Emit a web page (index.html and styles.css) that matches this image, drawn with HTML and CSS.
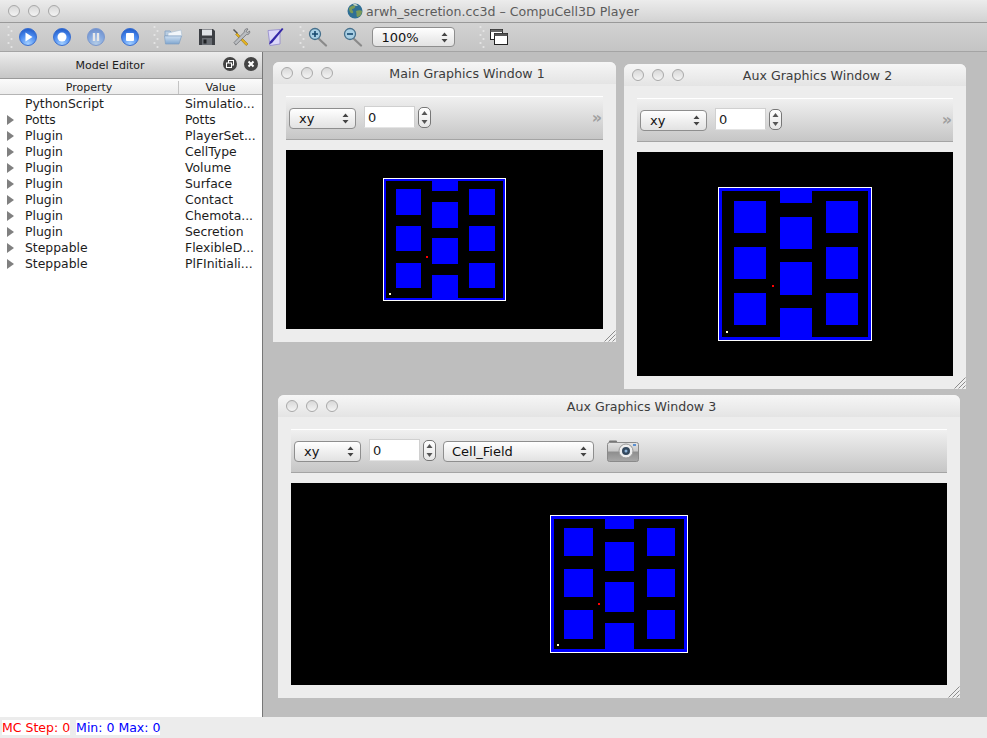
FILE: index.html
```html
<!DOCTYPE html>
<html>
<head>
<meta charset="UTF-8">
<title>arwh_secretion.cc3d - CompuCell3D Player</title>
<link rel="stylesheet" href="styles.css">
</head>
<body>

<svg class="defs" width="0" height="0">
  <defs>
    <radialGradient id="ball" cx="50%" cy="90%" r="85%">
      <stop offset="0" stop-color="#a4d0ff"/>
      <stop offset="0.6" stop-color="#4c8cf0"/>
      <stop offset="1" stop-color="#2560cc"/>
    </radialGradient>
    <linearGradient id="folder" x1="0" y1="0" x2="0" y2="1">
      <stop offset="0" stop-color="#cfe0f2"/>
      <stop offset="1" stop-color="#7fa6cf"/>
    </linearGradient>
    <linearGradient id="camera" x1="0" y1="0" x2="0" y2="1">
      <stop offset="0" stop-color="#e4e4e4"/>
      <stop offset="0.45" stop-color="#c8c8c8"/>
      <stop offset="0.5" stop-color="#8e8e8e"/>
      <stop offset="1" stop-color="#a8a8a8"/>
    </linearGradient>
    <symbol id="lattice" viewBox="0 0 154 154">
      <rect x="0.5" y="0.5" width="153" height="153" fill="#00f" stroke="#fff" vector-effect="non-scaling-stroke"/>
      <rect x="4" y="4" width="146" height="146" fill="#000"/>
      <rect x="16" y="14" width="32" height="32" fill="#00f"/>
      <rect x="16" y="60" width="32" height="32" fill="#00f"/>
      <rect x="16" y="106" width="32" height="32" fill="#00f"/>
      <rect x="108" y="14" width="32" height="32" fill="#00f"/>
      <rect x="108" y="60" width="32" height="32" fill="#00f"/>
      <rect x="108" y="106" width="32" height="32" fill="#00f"/>
      <rect x="61.6" y="1" width="32" height="15" fill="#00f"/>
      <rect x="61.6" y="30" width="32" height="32" fill="#00f"/>
      <rect x="61.6" y="75" width="32" height="33" fill="#00f"/>
      <rect x="61.6" y="121" width="32" height="32" fill="#00f"/>
      <rect x="54" y="98" width="2" height="2" fill="#f00"/>
      <rect x="8" y="144" width="2" height="2" fill="#ffc"/>
    </symbol>
    <symbol id="updown" viewBox="0 0 7 11">
      <path d="M3.5 0.5L6.5 4H0.5zM3.5 10.5L0.5 7H6.5z" fill="#444"/>
    </symbol>
    <symbol id="grip" viewBox="0 0 6 24">
      <g fill="#e6e6e6">
        <circle cx="1.5" cy="2" r="1.1"/><circle cx="4.5" cy="6" r="1.1"/><circle cx="1.5" cy="10" r="1.1"/>
        <circle cx="4.5" cy="14" r="1.1"/><circle cx="1.5" cy="18" r="1.1"/><circle cx="4.5" cy="22" r="1.1"/>
      </g>
    </symbol>
    <symbol id="resize" viewBox="0 0 12 12">
      <path d="M0.5 11.5L11.5 0.5M4.5 11.5L11.5 4.5M8.5 11.5L11.5 8.5" stroke="#8c8c8c" fill="none"/>
    </symbol>
  </defs>
</svg>

<div class="titlebar">
  <div class="lights">
    <span class="light"></span><span class="light"></span><span class="light"></span>
  </div>
  <div class="app-title">
    <svg class="globe" width="16" height="16" viewBox="0 0 16 16">
      <circle cx="8" cy="8" r="7.5" fill="#2f6f95"/>
      <path d="M2 5c2-2 4-3 6-2 1 1-1 3-3 3 0 2 2 2 1 4-2 1-4-1-4-5zM9 8c2-1 5-1 6 0 0 3-2 6-5 6-1-2 0-3-1-6z" fill="#7b9a58"/>
      <path d="M6 1.5c2-1 4 0 5 1-2 1-4 0-5-1z" fill="#c8d4c0"/>
    </svg>
    <span>arwh_secretion.cc3d &ndash; CompuCell3D Player</span>
  </div>
</div>

<div class="toolbar">
  <svg class="tb-grip" width="6" height="24"><use href="#grip"/></svg>
  <div class="tb-group tb-run">
    <svg class="tool" viewBox="0 0 20 20"><circle cx="10" cy="10" r="8.5" fill="url(#ball)" stroke="#3a6fd0"/><path d="M7.5 5.5L14.5 10L7.5 14.5z" fill="#fff"/></svg>
    <svg class="tool" viewBox="0 0 20 20"><circle cx="10" cy="10" r="8.5" fill="url(#ball)" stroke="#3a6fd0"/><circle cx="10" cy="10" r="4.5" fill="#fff"/></svg>
    <svg class="tool dim" viewBox="0 0 20 20"><circle cx="10" cy="10" r="8.5" fill="url(#ball)" stroke="#3a6fd0"/><path d="M6.8 6h2.4v8H6.8zM10.8 6h2.4v8h-2.4z" fill="#fff"/></svg>
    <svg class="tool" viewBox="0 0 20 20"><circle cx="10" cy="10" r="8.5" fill="url(#ball)" stroke="#3a6fd0"/><rect x="6" y="6" width="8" height="8" rx="1" fill="#fff"/></svg>
  </div>
  <svg class="tb-grip grip-b" width="6" height="24"><use href="#grip"/></svg>
  <div class="tb-group tb-file">
    <svg class="tool" viewBox="0 0 20 20"><path d="M2 4h5l2 2h6v3H2z" fill="#b9cde2" stroke="#8ea9c6"/><path d="M5 6l13-3 1 6H5z" fill="#f2f6fa" stroke="#a8bdd2" stroke-width="0.6"/><path d="M1.5 9h17L16 17H2.5z" fill="url(#folder)" stroke="#7f9fc2" stroke-width="0.7"/></svg>
    <svg class="tool" viewBox="0 0 20 20"><path d="M2 2h14l2 2v14H2z" fill="#3c3f44"/><rect x="5" y="2.5" width="10" height="6" fill="#dfe2e6"/><rect x="5" y="11" width="10" height="7" fill="#6a6e74"/><rect x="6.5" y="12.5" width="3" height="4" fill="#1f2124"/></svg>
    <svg class="tool" viewBox="0 0 20 20"><path d="M3 2l4 4-1 1-4-4z" fill="#555"/><path d="M6 6l11 11-1.8 1.6L4.6 7.4z" fill="#e5b21c" stroke="#8a6a10" stroke-width="0.5"/><path d="M17 2c-2-1-4 1-3.6 3L3 15.5 4.800 18l10.600-10.400c2 .5 4-1.500 3.200-3.600l-2 1.500-1.500-1z" fill="#b9bcc0" stroke="#55585c" stroke-width="0.6"/></svg>
    <svg class="tool" viewBox="0 0 20 20"><path d="M3 3.500L15 2.500V17L5 18.500z" fill="#dcd8f8" stroke="#8f86cc" stroke-width="0.8"/><path d="M17 1l1.500 1L7 16l-3 1.500L5 14.500z" fill="#3427a8"/></svg>
  </div>
  <svg class="tb-grip grip-c" width="6" height="24"><use href="#grip"/></svg>
  <div class="tb-group tb-zoom">
    <svg class="tool" viewBox="0 0 20 20"><path d="M10.500 11.500L18 18.500" stroke="#8a8a8a" stroke-width="2.200" stroke-linecap="round"/><circle cx="7" cy="7" r="5.500" fill="#a9cfe4" stroke="#46708c" stroke-width="1.300"/><path d="M4 7h6M7 4v6" stroke="#16486e" stroke-width="1.600"/></svg>
    <svg class="tool" viewBox="0 0 20 20"><path d="M10.500 11.500L18 18.500" stroke="#8a8a8a" stroke-width="2.200" stroke-linecap="round"/><circle cx="7" cy="7" r="5.500" fill="#a9cfe4" stroke="#46708c" stroke-width="1.300"/><path d="M4 7h6" stroke="#16486e" stroke-width="1.600"/></svg>
  </div>
  <div class="combo zoom-combo">
    <span>100%</span>
    <svg width="7" height="11"><use href="#updown"/></svg>
  </div>
  <svg class="tb-grip grip-d" width="6" height="24"><use href="#grip"/></svg>
  <svg class="copy-icon" width="18" height="16" viewBox="0 0 18 16">
    <rect x="0.500" y="0.500" width="12" height="10" fill="#fff" stroke="#222"/>
    <rect x="0.500" y="0.500" width="12" height="2.500" fill="#666"/>
    <rect x="4.500" y="4.500" width="13" height="11" fill="#fff" stroke="#222"/>
    <rect x="4.500" y="4.500" width="13" height="2.500" fill="#555"/>
  </svg>
</div>

<div class="main">
  <div class="editor">
    <div class="editor-head">
      <span class="editor-title">Model Editor</span>
      <svg class="dock-btn dock-float" width="14" height="14" viewBox="0 0 14 14"><circle cx="7" cy="7" r="7" fill="#444"/><rect x="5.500" y="3.500" width="5" height="4.500" fill="none" stroke="#fff"/><rect x="3.500" y="6" width="5" height="4.500" fill="#444" stroke="#fff"/></svg>
      <svg class="dock-btn dock-close" width="14" height="14" viewBox="0 0 14 14"><circle cx="7" cy="7" r="7" fill="#444"/><path d="M4.500 4.500l5 5M9.500 4.500l-5 5" stroke="#fff" stroke-width="2"/></svg>
    </div>
    <div class="columns">
      <span class="col-prop">Property</span>
      <span class="col-val">Value</span>
    </div>
    <ul class="tree">
      <li class="leaf"><span class="prop">PythonScript</span><span class="val">Simulatio...</span></li>
      <li><span class="prop">Potts</span><span class="val">Potts</span></li>
      <li><span class="prop">Plugin</span><span class="val">PlayerSet...</span></li>
      <li><span class="prop">Plugin</span><span class="val">CellType</span></li>
      <li><span class="prop">Plugin</span><span class="val">Volume</span></li>
      <li><span class="prop">Plugin</span><span class="val">Surface</span></li>
      <li><span class="prop">Plugin</span><span class="val">Contact</span></li>
      <li><span class="prop">Plugin</span><span class="val">Chemota...</span></li>
      <li><span class="prop">Plugin</span><span class="val">Secretion</span></li>
      <li><span class="prop">Steppable</span><span class="val">FlexibleD...</span></li>
      <li><span class="prop">Steppable</span><span class="val">PlFInitiali...</span></li>
    </ul>
  </div>

  <div class="desk">
    <section class="window win-1">
      <header class="win-head">
        <div class="lights"><span class="light"></span><span class="light"></span><span class="light"></span></div>
        <span class="win-title">Main Graphics Window 1</span>
      </header>
      <div class="win-body">
        <div class="win-tools">
          <div class="combo plane"><span>xy</span><svg width="7" height="11"><use href="#updown"/></svg></div>
          <div class="field">0</div>
          <div class="stepper"><svg width="7" height="15" viewBox="0 0 7 15"><path d="M3.500 1L6.500 5H0.500zM3.500 14L0.500 10H6.500z" fill="#555"/></svg></div>
          <span class="more">&raquo;</span>
        </div>
        <div class="view"><svg class="lattice l-1"><use href="#lattice"/></svg></div>
      </div>
      <svg class="resize" width="12" height="12"><use href="#resize"/></svg>
    </section>

    <section class="window win-2">
      <header class="win-head">
        <div class="lights"><span class="light"></span><span class="light"></span><span class="light"></span></div>
        <span class="win-title">Aux Graphics Window 2</span>
      </header>
      <div class="win-body">
        <div class="win-tools">
          <div class="combo plane"><span>xy</span><svg width="7" height="11"><use href="#updown"/></svg></div>
          <div class="field">0</div>
          <div class="stepper"><svg width="7" height="15" viewBox="0 0 7 15"><path d="M3.500 1L6.500 5H0.500zM3.500 14L0.500 10H6.500z" fill="#555"/></svg></div>
          <span class="more">&raquo;</span>
        </div>
        <div class="view"><svg class="lattice l-2"><use href="#lattice"/></svg></div>
      </div>
      <svg class="resize" width="12" height="12"><use href="#resize"/></svg>
    </section>

    <section class="window win-3">
      <header class="win-head">
        <div class="lights"><span class="light"></span><span class="light"></span><span class="light"></span></div>
        <span class="win-title">Aux Graphics Window 3</span>
      </header>
      <div class="win-body">
        <div class="win-tools">
          <div class="combo plane"><span>xy</span><svg width="7" height="11"><use href="#updown"/></svg></div>
          <div class="field">0</div>
          <div class="stepper"><svg width="7" height="15" viewBox="0 0 7 15"><path d="M3.500 1L6.500 5H0.500zM3.500 14L0.500 10H6.500z" fill="#555"/></svg></div>
          <div class="combo fields"><span>Cell_Field</span><svg width="7" height="11"><use href="#updown"/></svg></div>
          <svg class="camera" width="32" height="22" viewBox="0 0 32 22">
            <rect x="2" y="0.500" width="8" height="3" rx="1" fill="#777"/>
            <rect x="0.500" y="2.500" width="31" height="19" rx="2" fill="url(#camera)" stroke="#8a8a8a"/>
            <circle cx="19" cy="11" r="7" fill="#eee" stroke="#999"/>
            <circle cx="19" cy="11" r="4" fill="#33485e"/>
            <circle cx="19" cy="11" r="1.500" fill="#8fb4d8"/>
            <rect x="26" y="4" width="3" height="2" fill="#5a8fd0"/>
          </svg>
        </div>
        <div class="view"><svg class="lattice l-3"><use href="#lattice"/></svg></div>
      </div>
      <svg class="resize" width="12" height="12"><use href="#resize"/></svg>
    </section>
  </div>
</div>

<div class="status">
  <span class="chip step">MC Step: 0</span>
  <span class="chip range">Min: 0 Max: 0</span>
</div>

</body>
</html>
```

FILE: styles.css
```css
html, body {
  margin: 0;
  height: 100%;
}
body {
  width: 987px;
  height: 738px;
  overflow: hidden;
  display: flex;
  flex-direction: column;
  font-family: "DejaVu Sans", Verdana, sans-serif;
  font-size: 12.4px;
  color: #1c1c1c;
  background-color: #ececec;
}
.defs {
  position: absolute;
}

/* title bar */
.titlebar {
  height: 22px;
  flex: none;
  display: flex;
  align-items: center;
  justify-content: center;
  position: relative;
  background: linear-gradient(#ececec, #d2d2d2);
  border-bottom: 1px solid #999;
}
.titlebar .lights {
  position: absolute;
  left: 8px;
  top: 5px;
}
.lights {
  display: flex;
  gap: 8px;
}
.light {
  width: 10px;
  height: 10px;
  border: 1px solid #a8a8a8;
  border-radius: 50%;
  background: linear-gradient(#d8d8d8, #f4f4f4);
}
.app-title {
  display: flex;
  align-items: center;
  gap: 3px;
  color: #5c5c5c;
  font-size: 12.6px;
  margin-left: -1px;
}

/* main toolbar */
.toolbar {
  height: 29px;
  flex: none;
  display: flex;
  align-items: center;
  padding-left: 7px;
  background: linear-gradient(#d2d2d2, #c4c4c4);
  border-bottom: 1px solid #a4a4a4;
  box-sizing: border-box;
}
.tb-group {
  display: flex;
  gap: 14px;
}
.tool {
  width: 20px;
  height: 20px;
}
.tool.dim {
  opacity: 0.55;
}
.tb-run {
  margin-left: 4.5px;
}
.grip-b {
  margin-left: 13px;
}
.tb-file {
  margin-left: 4px;
}
.grip-c {
  margin-left: 14px;
}
.tb-zoom {
  margin-left: 3px;
  gap: 15px;
}
.zoom-combo {
  margin-left: 9px;
  width: 83px;
  height: 20px;
  font-size: 12px;
}
.grip-d {
  margin-left: 24px;
}
.copy-icon {
  margin-left: 5px;
}

/* shared controls */
.combo {
  display: flex;
  align-items: center;
  justify-content: space-between;
  box-sizing: border-box;
  padding: 0 6px 0 9px;
  background: linear-gradient(#ffffff, #f0f0f0 50%, #e2e2e2);
  border: 1px solid #8e8e8e;
  border-radius: 4px;
  color: #111;
  font-size: 13px;
}

/* model editor */
.main {
  flex: 1;
  display: flex;
  min-height: 0;
}
.editor {
  width: 262px;
  flex: none;
  display: flex;
  flex-direction: column;
  background-color: #fff;
  border-right: 1px solid #777;
}
.editor-head {
  height: 26px;
  flex: none;
  position: relative;
  display: flex;
  align-items: center;
  background: linear-gradient(#ececec, #c6c6c6);
  border-bottom: 1px solid #9a9a9a;
}
.editor-title {
  width: 220px;
  text-align: center;
  font-size: 11px;
}
.dock-btn {
  position: absolute;
  top: 5px;
}
.dock-float {
  left: 223px;
}
.dock-close {
  left: 244px;
}
.columns {
  height: 14px;
  padding-top: 1px;
  flex: none;
  display: flex;
  align-items: center;
  font-size: 11px;
  background: linear-gradient(#fbfbfb, #ececec);
  border-bottom: 1px solid #b4b4b4;
}
.col-prop {
  width: 179px;
  text-align: center;
  border-right: 1px solid #c4c4c4;
  box-sizing: border-box;
}
.col-val {
  flex: 1;
  text-align: center;
}
.tree {
  list-style: none;
  margin: 0;
  padding: 1px 0 0;
}
.tree li {
  height: 16px;
  display: flex;
  align-items: center;
  position: relative;
  line-height: 16px;
}
.tree li::before {
  content: "";
  position: absolute;
  left: 7px;
  top: 3px;
  border-left: 7px solid #808080;
  border-top: 5px solid transparent;
  border-bottom: 5px solid transparent;
}
.tree li.leaf::before {
  display: none;
}
.prop {
  width: 160px;
  margin-left: 25px;
}

/* graphics windows */
.desk {
  flex: 1;
  position: relative;
  background-color: #bebebe;
}
.window {
  position: absolute;
  display: flex;
  flex-direction: column;
  background-color: #ededed;
  border-radius: 6px 6px 0 0;
  overflow: hidden;
}
.win-1 {
  left: 10px;
  top: 10px;
  width: 343px;
  height: 280px;
}
.win-2 {
  left: 361px;
  top: 12px;
  width: 342px;
  height: 325px;
}
.win-3 {
  left: 15px;
  top: 343px;
  width: 682px;
  height: 303px;
}
.win-head {
  height: 22px;
  flex: none;
  display: flex;
  align-items: center;
  justify-content: center;
  position: relative;
  background: linear-gradient(#f6f6f6, #e4e4e4);
}
.win-head .lights {
  position: absolute;
  left: 8px;
  top: 5px;
}
.win-title {
  color: #3c3c3c;
  font-size: 12.6px;
  margin-left: 45px;
}
.win-body {
  flex: 1;
  display: flex;
  flex-direction: column;
  gap: 10px;
  padding: 12px 13px 13px;
  min-height: 0;
}
.win-tools {
  height: 44px;
  flex: none;
  display: flex;
  align-items: center;
  box-sizing: border-box;
  padding-left: 3px;
  background: linear-gradient(#f0f0f0, #c6c6c6);
  border-top: 1px solid #fff;
  border-bottom: 1px solid #a4a4a4;
}
.plane {
  width: 67px;
  height: 21px;
}
.field {
  width: 51px;
  height: 22px;
  margin-left: 8px;
  margin-top: -2px;
  padding-left: 3px;
  box-sizing: border-box;
  line-height: 22px;
  font-size: 13px;
  background-color: #fff;
  border: 1px solid #d0d0d0;
  border-bottom-color: #e4e4e4;
}
.stepper {
  width: 13px;
  height: 21px;
  margin-left: 3px;
  margin-top: -2px;
  box-sizing: border-box;
  display: flex;
  align-items: center;
  justify-content: center;
  background: linear-gradient(#fff, #e6e6e6);
  border: 1px solid #777;
  border-radius: 5px;
}
.more {
  margin-left: auto;
  padding-right: 1px;
  color: #a0a0a0;
  font-size: 16px;
  font-weight: bold;
  line-height: 16px;
}
.fields {
  width: 151px;
  height: 21px;
  margin-left: 7px;
  padding-left: 8px;
}
.camera {
  margin-left: 13px;
}
.view {
  flex: 1;
  display: flex;
  align-items: center;
  justify-content: center;
  background-color: #000;
  min-height: 0;
}
.lattice {
  display: block;
  shape-rendering: crispEdges;
}
.l-1 {
  width: 123px;
  height: 123px;
}
.l-2 {
  width: 154px;
  height: 154px;
}
.l-3 {
  width: 138px;
  height: 138px;
}
.resize {
  position: absolute;
  right: 0;
  bottom: 0;
}

/* status bar */
.status {
  height: 21px;
  flex: none;
  display: flex;
  align-items: center;
  gap: 6px;
  padding-left: 2px;
  background-color: #ececec;
  font-size: 12.5px;
}
.chip {
  height: 15px;
  line-height: 15px;
  background-color: #fff;
}
.step {
  color: #f00;
}
.range {
  color: #00f;
}
```
